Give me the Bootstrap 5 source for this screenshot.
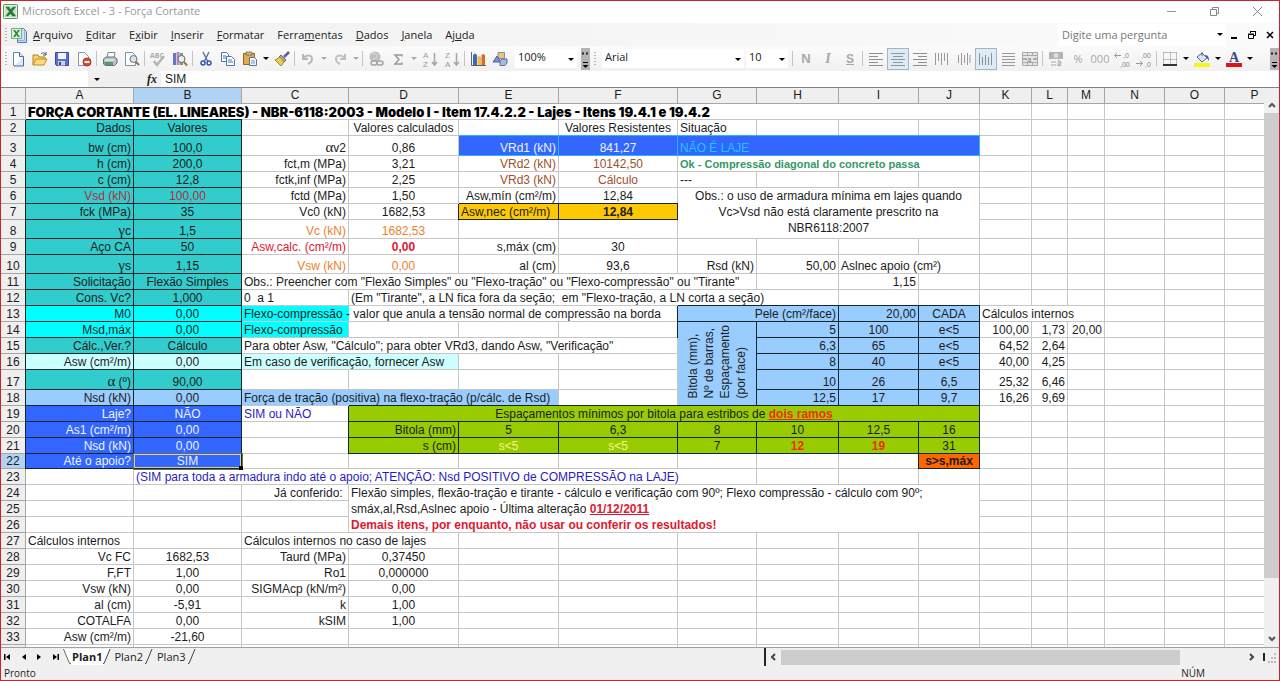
<!DOCTYPE html>
<html lang="pt-BR">
<head>
<meta charset="utf-8">
<meta name="viewport" content="width=device-width, initial-scale=1">
<title>Microsoft Excel - 3 - Força Cortante</title>
<link href="https://cdn.jsdelivr.net/npm/bootstrap@5.3.0/dist/css/bootstrap.min.css" rel="stylesheet">
<style>
  :root { --ui: "Open Sans", "Noto Sans", sans-serif; --cell: "Liberation Sans", Arial, sans-serif; }
  body { font-family: var(--ui); font-size: 11px; line-height: 16px; color: #1c1c1c; background: #f0f0f0; }
  .app { height: 100vh; border: 1px solid #cc2229; }
  .app > * { flex-shrink: 0; }
  button, input, select { font: inherit; color: inherit; border: 0; padding: 0; background: none; border-radius: 0; }
  svg { display: block; }

  .titlebar { height: 22px; background: #fff; color: #999; font-size: 11px; padding: 0 0 2px 2px; }
  .titlebar button { width: 43px; color: #999; }
  .menubar { height: 23px; background: linear-gradient(90deg, #f1f1f1, #fbfbfb); padding-left: 4px; }
  .menubar .menus { gap: 13px; margin-left: 6px; }
  .menubar .menus a { color: #222; text-decoration: none; }
  .menubar .askbox { background: #fff; width: 167px; }
  .menubar .ask { width: 150px; padding-left: 4px; }
  .menubar .ask::placeholder { color: #777; opacity: 1; }
  .grip { width: 2px; height: 14px; flex: none; background: repeating-linear-gradient(#b5b5b5 0 1px, transparent 1px 3px); }

  .toolbar { height: 25px; background: linear-gradient(#fbfbfb, #f1f1f1); padding-left: 4px; overflow: hidden; }
  .tb { width: 22px; height: 22px; flex: none; display: flex; align-items: center; justify-content: center; }
  .tb.on { background: #dfeaf5; border: 1px solid #a3b4c4; }
  .tb.off { color: #a8a8a8; }
  .dd { width: 10px; height: 22px; flex: none; display: flex; align-items: center; justify-content: center; }
  .dd::before, .drop::after { content: ""; border: 3px solid transparent; border-top-color: #000; border-bottom: 0; }
  .dd.off::before { border-top-color: #aaa; }
  .vr-line { width: 1px; height: 15px; margin: 0 2px 0 1px; background: #c4c4c4; flex: none; }
  .drop { background: #fff; height: 19px; position: relative; flex: none; }
  .drop select { appearance: none; width: 100%; padding-left: 3px; }
  .drop::after { position: absolute; right: 3px; top: 9px; pointer-events: none; }
  .zoom-drop { width: 62px; } .font-drop { width: 142px; margin-left: 2px; } .size-drop { width: 42px; margin-left: 2px; }
  .bold-n { font: bold 13px var(--cell); } .ital-i { font: italic bold 14px "Liberation Serif", serif; } .under-s { font: bold 12px var(--cell); }
  .more { width: 9px; height: 22px; background: #b4b4b4; flex: none; }

  .formula { height: 16px; background: #fff; font-family: var(--cell); font-size: 12px; }
  .formula .namebox { width: 87px; background: #fff; }
  .formula .tools { width: 73px; background: #f0f0f0; }
  .formula .tools .dd { height: 16px; }
  .formula .fx { font: italic bold 12px/14px "Liberation Serif", serif; margin-right: 4px; }

  .work { background: #fff; border-top: 1px solid #808080; flex: 1 1 0; min-height: 0; overflow: hidden; }
  .sheetview { overflow: hidden; min-width: 0; }
  .sheet { table-layout: fixed; width: 1284px; border-collapse: separate; border-spacing: 0; font-family: var(--cell); font-size: 12px; color: #1c1c1c; }
  .sheet th, .sheet td { padding: 0 2px; border-right: 1px solid #c6c6c6; border-bottom: 1px solid #c6c6c6; white-space: nowrap; vertical-align: bottom; line-height: 14px; }
  .sheet th { background: #efefef; border-color: #a6a6a6; font-weight: 400; text-align: center; }
  .sheet th.sel { background: #b0d3f3; }
  .sheet thead th { line-height: 15px; }
  .r { text-align: right; } .c { text-align: center; }
  .sheet .open { border-right-color: transparent; }
  .sheet .wrap { white-space: normal; line-height: 16px; padding: 0 10px; vertical-align: top; }
  .sheet .notes { line-height: 16px; vertical-align: top; border-bottom: 0; box-shadow: inset 0 -1px #c6c6c6; }
  .sheet .box { border-color: #10282c; box-shadow: -1px 0 #10282c, 0 -1px #10282c; }
  .teal { background: #33cccc; } .cyan { background: #00ffff; } .pale { background: #ccffff; }
  .sky { background: #99ccff; } .royal { background: #3366ff; color: #eef3ff; } .lime { background: #99cc00; }
  .gold { background: #fec803; } .fire { background: #ff6600; }
  .sheet .edge { border-color: #28b4ff; box-shadow: 0 -1px #28b4ff; }
  .brown { color: #a0502e; } .orange { color: #f0802c; } .red { color: #e01830; } .wine { color: #b02c44; }
  .green { color: #339966; } .blue { color: #2a1cc0; } .aqua { color: #1cc8ff; } .lemon { color: #f4f78c; } .hot { color: #f02c08; }
  .bo { font-weight: 700; }
  .sheet .slim { font-size: 11px; }
  .sheet .heavy { font-family: Inter, sans-serif; font-weight: 900; font-size: 13px; color: #000; }
  .greek { font: 15px/12px "Liberation Serif", serif; }
  .sheet .cursor { position: relative; outline: 1px solid #6d6a55; box-shadow: inset 0 0 0 1px #d9cf94; }
  .cursor::after { content: ""; position: absolute; right: -2px; bottom: -2px; width: 4px; height: 4px; background: #000; }
  .sheet .tall { vertical-align: middle; padding: 0; }
  .tall span { writing-mode: vertical-rl; transform: rotate(180deg); line-height: 16px; display: inline-block; text-align: left; }

  .vbar { width: 15px; background: #f0f0f0; flex: none; }
  .vbar button { height: 17px; display: flex; justify-content: center; align-items: center; width: 100%; flex: none; }
  .vbar .knob { background: #cdcdcd; flex: 0 0 90%; }
  .tabs { height: 19px; background: #f0f0f0; border-top: 1px solid #a0a0a0; }
  .tabs .nav4 { gap: 4px; padding: 0 1px 0 1px; }
  .tabs .nav4 button { width: 12px; }
  .tabs a { color: #222; text-decoration: none; padding: 0 2px 0 3px; }
  .tabs .current { background: #fff; font-weight: 700; padding: 0 1px; }
  .sheetlist { flex: 0 0 763px; min-width: 0; }
  .hbar .knob { background: #cdcdcd; height: 15px; }
  .status { height: 14px; background: #f0f0f0; font-size: 10px; line-height: 14px; padding: 0 74px 0 3px; }
</style>
</head>
<body>
<svg class="d-none" aria-hidden="true">
  <symbol id="xl" viewBox="0 0 16 16"><rect x=".5" y=".5" width="15" height="15" rx="1" fill="#e8f2e4" stroke="#4d8b50"/><rect x="2" y="2" width="12" height="12" fill="#c9e2c3"/><path d="M2.500 3h4L8 5.500 11 3h3l-4 5 4 5h-4L8 10.500 5.500 13H2.500l4-5z" fill="#237a3b"/></symbol>
  <symbol id="left" viewBox="0 0 16 16"><path d="M1 2.500h14M1 5.500h9M1 8.500h14M1 11.500h9M1 14.500h14" stroke="#8f8f8f"/></symbol>
  <symbol id="vert" viewBox="0 0 16 16"><path d="M1.500 2v12M4.500 2v8M7.500 2v12M10.500 2v8M13.500 2v12" stroke="#999"/></symbol>
</svg>

<div class="app d-flex flex-column">
  <header class="titlebar d-flex align-items-center">
    <svg width="15" height="15"><use href="#xl"/></svg>
    <span class="ms-1 me-auto">Microsoft Excel - 3 - Força Cortante</span>
    <button aria-label="Minimizar"><svg class="m-auto" width="11" height="11"><path d="M1 5.500h9" stroke="#999"/></svg></button>
    <button aria-label="Restaurar"><svg class="m-auto" width="11" height="11" fill="none" stroke="#888"><path d="M1.500 3.500h6v6h-6zM3.500 3V1.500h6v6H8"/></svg></button>
    <button aria-label="Fechar"><svg class="m-auto" width="11" height="11"><path d="M1 1l9 9M10 1l-9 9" stroke="#888"/></svg></button>
  </header>

  <nav class="menubar d-flex align-items-center">
    <span class="grip me-1"></span>
    <svg width="16" height="16"><path d="M6.500 1.500h6l3 3v11h-9z" fill="#cfe0f5" stroke="#5478ac"/><path d="M13 3v10H7v1h7V4z" fill="#8eaedb"/><rect x=".5" y="1.500" width="10" height="10" fill="#dcefd8" stroke="#7fae7c"/><path d="M2 3h2l1.500 2L7 3h2L6.500 6.500 9 10H7L5.500 8 4 10H2l2.500-3.500z" fill="#2b8a3e"/></svg>
    <div class="menus d-flex me-auto">
      <a href="#"><u>A</u>rquivo</a><a href="#"><u>E</u>ditar</a><a href="#">E<u>x</u>ibir</a><a href="#"><u>I</u>nserir</a><a href="#"><u>F</u>ormatar</a><a href="#">Ferra<u>m</u>entas</a><a href="#"><u>D</u>ados</a><a href="#"><u>J</u>anela</a><a href="#">Aj<u>u</u>da</a>
    </div>
    <div class="askbox d-flex align-items-center justify-content-between">
      <input class="ask" placeholder="Digite uma pergunta" aria-label="Digite uma pergunta">
      <button class="dd" aria-label="Perguntas recentes"></button>
    </div>
    <button class="ms-1" aria-label="Minimizar pasta"><svg width="10" height="10"><path d="M2 8h6" stroke="#000" stroke-width="2"/></svg></button>
    <button class="ms-2" aria-label="Restaurar pasta"><svg width="10" height="10" fill="none" stroke="#000"><path d="M1.500 4.500h5v4h-5zM1 4h6M3.500 3V1.500h5v4H7M3 1.500h6"/></svg></button>
    <button class="ms-2 me-1" aria-label="Fechar pasta"><svg width="10" height="10"><path d="M2 2l6 6M8 2L2 8" stroke="#000" stroke-width="1.500"/></svg></button>
  </nav>

  <div class="toolbar d-flex align-items-center">
    <span class="grip"></span>
    <button class="tb" aria-label="Novo"><svg width="16" height="16"><path d="M3.500 1.500h6l4 4v9h-10z" fill="#fff" stroke="#6484ae"/><path d="M9.500 1.500v4h4M13.500 6v9H4" fill="#dce8f7" stroke="#4a6895"/></svg></button>
    <button class="tb" aria-label="Abrir"><svg width="16" height="16"><path d="M1 14V4h5l1 2h6v3" fill="#f6d56b" stroke="#ad852e"/><path d="M1 14l3-6h11l-3 6z" fill="#ffd978" stroke="#b98d2f"/><path d="M9 3c2-2 4-1 5 1M14 1v3h-3" fill="none" stroke="#555"/></svg></button>
    <button class="tb" aria-label="Salvar"><svg width="16" height="16"><path d="M1.500 1.500h13v13h-12l-1-1z" fill="#5b6fd0" stroke="#3e4c9c"/><rect x="4" y="2" width="8" height="6" fill="#f2f5ff"/><rect x="4" y="10" width="7" height="4.500" fill="#c9d1ee"/><path d="M5 11h2v3H5z" fill="#39468e"/></svg></button>
    <button class="tb" aria-label="Permissão"><svg width="16" height="16"><path d="M2.500 1.500h6l4 4v9h-10z" fill="#fff" stroke="#8796ac"/><circle cx="11" cy="11" r="4" fill="#dc4b31" stroke="#a8321d"/><path d="M8.500 11h5" stroke="#fff" stroke-width="2"/></svg></button>
    <span class="vr-line"></span>
    <button class="tb" aria-label="Imprimir"><svg width="16" height="16"><path d="M5 7l1-5.500h7L12 7z" fill="#fff" stroke="#788"/><path d="M1.500 8l3-2h8l2.500 2v4l-2.500 2.500h-9L1.500 13z" fill="#b8c1c9" stroke="#65717b"/><path d="M2 11h9v3H3z" fill="#5b9b64"/><path d="M3 9h9" stroke="#fff"/></svg></button>
    <button class="tb" aria-label="Visualizar impressão"><svg width="16" height="16"><path d="M1.500 1.500h7l3 3v10h-10z" fill="#fff" stroke="#7f91ab"/><circle cx="9.500" cy="8" r="3.500" fill="#cfe5f6" stroke="#68747f"/><path d="M12 11l3 3" stroke="#8c6d4c" stroke-width="2"/></svg></button>
    <span class="vr-line"></span>
    <button class="tb off" aria-label="Verificar ortografia"><svg width="16" height="18"><path d="M4 11l3 4 7-9" fill="none" stroke="#b5b5b5" stroke-width="2.500"/><text x="0" y="8" font-size="7" font-weight="700" fill="#aaa">ABC</text></svg></button>
    <button class="tb" aria-label="Pesquisar"><svg width="16" height="16"><path d="M1 2h3v12H1z" fill="#6a76c4"/><path d="M4.500 1h3v13h-3z" fill="#b987c0"/><path d="M8 2h3v12H8z" fill="#7d9b5e"/><circle cx="9.500" cy="8" r="3.500" fill="#e2eef8" stroke="#667"/><path d="M12 11l3 3.500" stroke="#a2762d" stroke-width="2"/></svg></button>
    <span class="vr-line"></span>
    <button class="tb" aria-label="Recortar"><svg width="16" height="16" fill="none"><path d="M5 1l4.500 9M11 1L6.500 10" stroke="#61789c" stroke-width="1.500"/><circle cx="5" cy="12" r="2" stroke="#2f56b0" stroke-width="1.500"/><circle cx="11" cy="12" r="2" stroke="#2f56b0" stroke-width="1.500"/></svg></button>
    <button class="tb" aria-label="Copiar"><svg width="16" height="16" stroke="#4e72b4" fill="#fff"><path d="M1.500 1.500h5l2 2v7h-7z"/><path d="M6.500 5.500h5l3 3v6h-8z"/><path d="M3 5h3M3 7h3M8 9h4M8 11h5"/></svg></button>
    <button class="tb" aria-label="Colar"><svg width="16" height="16"><path d="M1.500 2.500h11v11h-11z" fill="#e2aa4b" stroke="#946526"/><path d="M4 1h6v3H4z" fill="#cdbd7f" stroke="#76694a" stroke-width=".8"/><path d="M7.500 6.500h5l2 2v6h-7z" fill="#f1f5fc" stroke="#5873a4"/><path d="M9 10h4M9 12h4" stroke="#7892c0"/></svg></button>
    <button class="dd" aria-label="Opções de colar"></button>
    <button class="tb" aria-label="Pincel"><svg width="16" height="16"><path d="M15 1l-5 5" stroke="#5a5fa3" stroke-width="2.500"/><path d="M7 4l5 5-2 2-5-5z" fill="#b0a8a0" stroke="#766"/><path d="M1 9l5-3 4 5-3 4z" fill="#e9cf56" stroke="#a8872b"/></svg></button>
    <span class="vr-line"></span>
    <button class="tb off" aria-label="Desfazer"><svg width="16" height="16" fill="none" stroke="#b7b7b7" stroke-width="2"><path d="M3 3v5h5M3 8c2-4 9-5 9 0 0 2-2 4-4 5"/></svg></button>
    <button class="dd off" aria-label="Lista desfazer"></button>
    <button class="tb off" aria-label="Refazer"><svg width="16" height="16" fill="none" stroke="#c1c1c1" stroke-width="2"><path d="M13 3v5H8M13 8C11 4 4 3 4 8c0 2 2 4 4 5"/></svg></button>
    <button class="dd off" aria-label="Lista refazer"></button>
    <span class="vr-line"></span>
    <button class="tb off" aria-label="Hiperlink"><svg width="16" height="16"><circle cx="7" cy="6" r="5.500" fill="#c0c0c0"/><path d="M4 3c3-2 6 1 5 3s-4 1-4 3" fill="none" stroke="#ddd"/><g fill="#eee" stroke="#a5a5a5" stroke-width="1.500"><rect x="3" y="10" width="6" height="4" rx="2"/><rect x="9" y="10" width="6" height="4" rx="2"/></g></svg></button>
    <button class="tb off" aria-label="AutoSoma"><svg width="16" height="16"><path d="M12 5.500V4H5l4 4.500L5 13h7v-1.500" fill="none" stroke="#999" stroke-width="1.500"/></svg></button>
    <button class="dd off" aria-label="Outras funções"></button>
    <button class="tb off" aria-label="Classificação crescente"><svg width="16" height="20"><g font-family="Liberation Sans" font-size="8" fill="#999"><text x="1" y="9">A</text><text x="1" y="18">Z</text></g><path d="M12.500 4v11M10 13l2.500 3 2.500-3" fill="none" stroke="#a5a5a5" stroke-width="1.500"/></svg></button>
    <button class="tb off" aria-label="Classificação decrescente"><svg width="16" height="20"><g font-family="Liberation Sans" font-size="8" fill="#999"><text x="1" y="9">Z</text><text x="1" y="18">A</text></g><path d="M12.500 4v11M10 13l2.500 3 2.500-3" fill="none" stroke="#a5a5a5" stroke-width="1.500"/></svg></button>
    <span class="vr-line"></span>
    <button class="tb" aria-label="Gráfico"><svg width="16" height="16"><path d="M1.500 1v13.500H16" fill="none" stroke="#567"/><path d="M3 4l2-1.500L7 4v10H3z" fill="#3e67bd"/><path d="M7.500 6L9 5l2 1v8H7.500z" fill="#f0bd3d"/><path d="M11.500 4L13 3l2 1v10h-3.500z" fill="#d66a35"/></svg></button>
    <button class="tb" aria-label="Desenho"><svg width="16" height="16"><path d="M6 1.500h6.500v6H6z" fill="#e4c971" stroke="#8a8ca8"/><path d="M1 11l4-6 4 6z" fill="#7c92d6" stroke="#4d60a9"/><path d="M8 10l2-2h5v4l-2 2.500H8z" fill="#a9b8df" stroke="#5a6cae"/></svg></button>
    <div class="drop zoom-drop ms-1"><select aria-label="Zoom"><option>100%</option></select></div>
    <button class="more ms-1 lh-1" aria-label="Mais botões"><svg width="9" height="22"><path d="M1 5.500h2M5 5.500h2" stroke="#222" stroke-width="2"/><path d="M2 14.500h5" stroke="#000"/><path d="M1.500 17h6l-3 3z"/></svg></button>
    <span class="grip ms-1 me-1"></span>
    <div class="drop font-drop"><select aria-label="Fonte"><option>Arial</option></select></div>
    <div class="drop size-drop"><select aria-label="Tamanho"><option>10</option></select></div>
    <span class="vr-line ms-1"></span>
    <button class="tb off" aria-label="Negrito"><b class="bold-n">N</b></button>
    <button class="tb off" aria-label="Itálico"><i class="ital-i">I</i></button>
    <button class="tb off" aria-label="Sublinhado"><u class="under-s">S</u></button>
    <span class="vr-line"></span>
    <button class="tb" aria-label="Alinhar à esquerda"><svg width="16" height="16"><use href="#left"/></svg></button>
    <button class="tb on" aria-label="Centralizar"><svg width="16" height="16"><path d="M1 2.500h14M3 5.500h10M1 8.500h14M3 11.500h10M1 14.500h14" stroke="#8c98a4"/></svg></button>
    <button class="tb" aria-label="Alinhar à direita"><svg width="16" height="16"><path d="M1 2.500h14M6 5.500h9M1 8.500h14M6 11.500h9M1 14.500h14" stroke="#8f8f8f"/></svg></button>
    <button class="tb" aria-label="Alinhar em cima"><svg width="16" height="16"><use href="#vert"/></svg></button>
    <button class="tb" aria-label="Alinhar no meio"><svg width="16" height="16"><path d="M2.500 4v8M5.500 2v12M8.500 4v8M11.500 2v12M14 4v8" stroke="#999"/></svg></button>
    <button class="tb on" aria-label="Alinhar embaixo"><svg width="16" height="16"><path d="M1.500 2v12M4.500 6v8M7.500 4v10M10.500 6v8M13.500 2v12" stroke="#85929e"/></svg></button>
    <button class="tb" aria-label="Justificar"><svg width="16" height="16"><path d="M2 2.500h13M2 5.500h13M2 8.500h13M2 11.500h13M2 14.500h13" stroke="#999"/></svg></button>
    <button class="tb" aria-label="Mesclar"><svg width="16" height="16"><path d="M.5 1.500h15v13H.5zM.5 4.500h15M.5 11.500h15M5.500 2v2M10.500 2v2M5.500 12v2M10.500 12v2" fill="#e6e6e6" stroke="#aaa"/><path d="M1 8h4M11 8h4" stroke="#777"/><text x="5" y="11" font-size="8" fill="#777">a</text></svg></button>
    <span class="vr-line"></span>
    <button class="tb" aria-label="Moeda"><svg width="16" height="16"><path d="M1 1h14v7H1z" fill="#b4b4b4"/><circle cx="8" cy="4.500" r="2.500" fill="#ddd"/><path d="M3 11h5M3 14h5M10 9l3 2-1 4-3-1" fill="#ccc" stroke="#aaa"/></svg></button>
    <button class="tb off" aria-label="Porcentagem">%</button>
    <button class="tb off" aria-label="Milhares">000</button>
    <button class="tb off" aria-label="Aumentar casas decimais"><svg width="16" height="20"><path d="M7 6.500H1M3 4L.5 6.500 3 9" fill="none" stroke="#999"/><g font-family="Liberation Sans" font-size="7" fill="#888"><text x="9" y="9">,0</text><text x="6" y="18">,00</text></g></svg></button>
    <button class="tb off" aria-label="Diminuir casas decimais"><svg width="16" height="20"><path d="M0 14.500h6M4 12l2.500 2.500L4 17" fill="none" stroke="#999"/><g font-family="Liberation Sans" font-size="7" fill="#888"><text x="5" y="9">,00</text><text x="9" y="18">,0</text></g></svg></button>
    <span class="vr-line"></span>
    <button class="tb" aria-label="Bordas"><svg width="14" height="14"><path d="M.5 .5h13M.5 .5v13M13.500 .5v13M7.500 .5v13M.5 7.500h13" stroke="#888" stroke-dasharray="1 1" fill="none"/><path d="M0 13h14" stroke="#333" stroke-width="2"/></svg></button>
    <button class="dd" aria-label="Opções de bordas"></button>
    <button class="tb" aria-label="Cor do preenchimento"><svg width="16" height="16"><path d="M3 6l5-4 5 5-5 4z" fill="#dce6f3" stroke="#51699a"/><path d="M8 5V1" stroke="#51699a"/><path d="M11 4c3 0 4 2 4 6l-2-3z" fill="#3b5aa5"/><path d="M0 12h16v4H0z" fill="#fdf31c"/></svg></button>
    <button class="dd" aria-label="Cores de preenchimento"></button>
    <button class="tb" aria-label="Cor da fonte"><svg width="16" height="16"><text x="3" y="11" font-family="Liberation Serif" font-weight="700" font-size="14" fill="#34498a">A</text><path d="M0 12h16v4H0z" fill="#e0141c"/></svg></button>
    <button class="dd" aria-label="Cores da fonte"></button>
    <button class="more ms-auto lh-1" aria-label="Mais botões"><svg width="9" height="22"><path d="M1 5.500h2M5 5.500h2" stroke="#222" stroke-width="2"/><path d="M2 14.500h5" stroke="#000"/><path d="M1.500 17h6l-3 3z"/></svg></button>
  </div>

  <div class="formula d-flex">
    <input class="namebox" aria-label="Caixa de nome">
    <div class="tools d-flex align-items-center justify-content-between">
      <button class="dd ms-1" aria-label="Nomes"></button><span class="fx">fx</span>
    </div>
    <input class="flex-grow-1 px-1" aria-label="Barra de fórmulas" value="SIM">
  </div>

  <main class="work d-flex">
    <div class="sheetview flex-grow-1"><table class="sheet"></table></div>
    <div class="vbar d-flex flex-column">
      <button class="mt-2" aria-label="Rolar para cima"><svg width="8" height="6"><path d="M1 5l3-3 3 3" fill="none" stroke="#555" stroke-width="2"/></svg></button>
      <div class="flex-grow-1 d-flex flex-column"><div class="knob"></div></div>
      <button aria-label="Rolar para baixo"><svg width="8" height="6"><path d="M1 1l3 3 3-3" fill="none" stroke="#555" stroke-width="2"/></svg></button>
    </div>
  </main>

  <div class="tabs d-flex">
    <div class="sheetlist d-flex align-items-center">
      <div class="nav4 d-flex">
        <button aria-label="Primeira planilha"><svg width="12" height="8"><path d="M2 1h1.500v6H2zM8 1v6L4 4z"/></svg></button>
        <button aria-label="Planilha anterior"><svg width="12" height="8"><path d="M8 1v6L4 4z"/></svg></button>
        <button aria-label="Próxima planilha"><svg width="12" height="8"><path d="M3 1v6l4-3z"/></svg></button>
        <button aria-label="Última planilha"><svg width="12" height="8"><path d="M3 1v6l4-3zM7.500 1H9v6H7.500z"/></svg></button>
      </div>
      <svg width="8" height="16"><path d="M0 0h8v15H6z" fill="#fff"/><path d="M.5 0l6 14.500H8" fill="none" stroke="#666"/></svg>
      <a class="current" href="#">Plan1</a>
      <svg width="8" height="16"><path d="M0 0h7L1 15H0z" fill="#fff"/><path d="M7 0L1 14.500H0" fill="none" stroke="#444"/></svg>
      <a href="#">Plan2</a>
      <svg width="8" height="16"><path d="M7 0L1 14.500H0" fill="none" stroke="#444"/></svg>
      <a class="ps-1" href="#">Plan3</a>
      <svg width="8" height="16"><path d="M7 0L1 14.500H0" fill="none" stroke="#444"/></svg>
    </div>
    <div class="hbar d-flex align-items-center flex-grow-1 border-start border-2 border-dark">
      <button class="px-1" aria-label="Rolar para a esquerda"><svg width="7" height="8"><path d="M5 1L2 4l3 3" fill="none" stroke="#444" stroke-width="2"/></svg></button>
      <div class="flex-grow-1"><div class="knob" style="width:87%"></div></div>
      <button class="px-2 border-end border-2 border-dark" aria-label="Rolar para a direita"><svg width="7" height="8"><path d="M2 1l3 3-3 3" fill="none" stroke="#444" stroke-width="2"/></svg></button>
      <svg width="14" height="14"><path d="M9 4h2M6 8h2M9 8h2M3 12h2M6 12h2M9 12h2" stroke="#bbb" stroke-width="2"/></svg>
    </div>
  </div>
  <footer class="status d-flex justify-content-between"><span>Pronto</span><span>NÚM</span></footer>
</div>

<script>
  // Column widths in pixels; the first one holds the row numbers.
  const widths = [25, 108, 108, 107, 110, 100, 119, 79, 82, 80, 61, 52, 36, 37, 60, 60, 60];
  const letters = "ABCDEFGHIJKLMNOP";
  const heights = { 3: 20, 8: 19, 10: 19, 17: 20, 22: 15 };
  const A = "<span class='greek'>α</span>", Y = "<span class='greek'>γ</span>";

  // cell address: [content, classes, colspan, rowspan]
  const cells = {
    A1: ["FORÇA CORTANTE (EL. LINEARES) - NBR-6118:2003 - Modelo I - Item 17.4.2.2 - Lajes - Itens 19.4.1 e 19.4.2", "heavy", 10],
    C3: [A + "v2", "r"], C4: ["fct,m (MPa)", "r"], C5: ["fctk,inf (MPa)", "r"], C6: ["fctd (MPa)", "r"], C7: ["Vc0 (kN)", "r"],
    C8: ["Vc (kN)", "r orange"], C9: ["Asw,calc. (cm²/m)", "r red"], C10: ["Vsw (kN)", "r orange"],
    D2: ["Valores calculados", "c"], D3: ["0,86", "c"], D4: ["3,21", "c"], D5: ["2,25", "c"], D6: ["1,50", "c"], D7: ["1682,53", "c"],
    D8: ["1682,53", "c orange"], D9: ["0,00", "c red bo"], D10: ["0,00", "c orange"],
    E3: ["VRd1 (kN)", "r royal edge"], F3: ["841,27", "c royal edge"], G3: ["NÃO É LAJE", "royal aqua edge", 4],
    E4: ["VRd2 (kN)", "r brown"], F4: ["10142,50", "c brown"], G4: ["Ok - Compressão diagonal do concreto passa", "green bo slim", 4],
    E5: ["VRd3 (kN)", "r brown"], F5: ["Cálculo", "c brown"], G5: ["---", ""],
    E6: ["Asw,mín (cm²/m)", "r"], F6: ["12,84", "c"], G6: ["Obs.: o uso de armadura mínima em lajes quando Vc&gt;Vsd não está claramente prescrito na NBR6118:2007", "c wrap", 4, 3],
    E7: ["Asw,nec (cm²/m)", "gold box"], F7: ["12,84", "c bo gold box"],
    F2: ["Valores Resistentes", "c"], G2: ["Situação", ""],
    E9: ["s,máx (cm)", "r"], F9: ["30", "c"], E10: ["al (cm)", "r"], F10: ["93,6", "c"],
    G10: ["Rsd (kN)", "r"], H10: ["50,00", "r"], I10: ["Aslnec apoio (cm²)", "", 2], I11: ["1,15", "r"],
    C11: ['Obs.: Preencher com "Flexão Simples" ou "Flexo-tração" ou "Flexo-compressão" ou "Tirante"', "", 5],
    C12: ["0&nbsp; a 1", ""], D12: ['(Em "Tirante", a LN fica fora da seção;&nbsp; em "Flexo-tração, a LN corta a seção)', "", 5],
    C13: ["Flexo-compressão - valor que anula a tensão normal de compressão na borda", "cyan open"], D13: ["", "", 3],
    G13: ["Pele (cm²/face)", "r sky box", 2], I13: ["20,00", "r sky box"], J13: ["CADA", "c sky box"], K13: ["Cálculos internos", "", 3],
    C14: ["Flexo-compressão", "cyan"], G14: ["<span>Bitola (mm),<br>Nº de barras,<br>Espaçamento<br>(por face)</span>", "c sky box tall", 1, 5],
    C15: ['Para obter Asw, "Cálculo"; para obter VRd3, dando Asw, "Verificação"', "", 4],
    C16: ["Em caso de verificação, fornecer Asw", "pale", 2],
    C18: ["Força de tração (positiva) na flexo-tração (p/cálc. de Rsd)", "sky", 3],
    C19: ["SIM ou NÃO", "blue"],
    D19: ["Espaçamentos mínimos por bitola para estribos de <u class='hot bo'>dois ramos</u>", "c lime box", 7],
    D20: ["Bitola (mm)", "r lime box"], D21: ["s (cm)", "r lime box"],
    J22: ["s&gt;s,máx", "c bo fire box"],
    B23: ["(SIM para toda a armadura indo até o apoio; ATENÇÃO: Nsd POSITIVO de COMPRESSÃO na LAJE)", "blue", 6],
    C24: ["Já conferido:&nbsp;", "r"],
    D24: ["Flexão simples, flexão-tração e tirante - cálculo e verificação com 90º; Flexo compressão - cálculo com 90º;<br>smáx,al,Rsd,Aslnec apoio - Última alteração <u class='red bo'>01/12/2011</u><br><span class='red bo'>Demais itens, por enquanto, não usar ou conferir os resultados!</span>", "notes", 7, 3],
    A27: ["Cálculos internos", ""], C27: ["Cálculos internos no caso de lajes", "", 2]
  };

  // Input block, rows 2 to 22: label, value, fill.
  [["Dados", "Valores", "teal"], ["bw (cm)", "100,0", "teal"], ["h (cm)", "200,0", "teal"], ["c (cm)", "12,8", "teal"],
   ["Vsd (kN)", "100,00", "teal wine"], ["fck (MPa)", "35", "teal"], [Y + "c", "1,5", "teal"], ["Aço CA", "50", "teal"],
   [Y + "s", "1,15", "teal"], ["Solicitação", "Flexão Simples", "teal"], ["Cons. Vc?", "1,000", "teal"], ["M0", "0,00", "cyan"],
   ["Msd,máx", "0,00", "cyan"], ["Cálc.,Ver.?", "Cálculo", "teal"], ["Asw (cm²/m)", "0,00", "pale"], [A + " (º)", "90,00", "teal"],
   ["Nsd (kN)", "0,00", "sky"], ["Laje?", "NÃO", "royal"], ["As1 (cm²/m)", "0,00", "royal"], ["Nsd (kN)", "0,00", "royal"],
   ["Até o apoio?", "SIM", "royal"]].forEach(([label, value, fill], i) => {
    cells["A" + (i + 2)] = [label, "r box " + fill];
    cells["B" + (i + 2)] = [value, "c box " + fill + (i === 20 ? " cursor" : "")];
  });

  // Skin reinforcement, rows 14 to 18, columns H to L.
  [["5", "100", "e&lt;5", "100,00", "1,73"], ["6,3", "65", "e&lt;5", "64,52", "2,64"], ["8", "40", "e&lt;5", "40,00", "4,25"],
   ["10", "26", "6,5", "25,32", "6,46"], ["12,5", "17", "9,7", "16,26", "9,69"]].forEach((row, i) => {
    row.forEach((v, k) => cells["HIJKL"[k] + (i + 14)] = [v, ["r sky box", "c sky box", "c sky box", "r", "r"][k]]);
  });
  cells.M14 = ["20,00", "r"];

  // Stirrup spacing, rows 20 and 21, columns E to J.
  ["5", "6,3", "8", "10", "12,5", "16"].forEach((v, k) => cells["EFGHIJ"[k] + 20] = [v, "c lime box"]);
  [["s&lt;5", "lemon"], ["s&lt;5", "lemon"], ["7", ""], ["12", "hot bo"], ["19", "hot bo"], ["31", ""]]
    .forEach(([v, look], k) => cells["EFGHIJ"[k] + 21] = [v, "c lime box " + look]);

  // Internal calculations, rows 28 to 33.
  [["Vc FC", "1682,53", "Taurd (MPa)", "0,37450"], ["F,FT", "1,00", "Ro1", "0,000000"], ["Vsw (kN)", "0,00", "SIGMAcp (kN/m²)", "0,00"],
   ["al (cm)", "-5,91", "k", "1,00"], ["COTALFA", "0,00", "kSIM", "1,00"], ["Asw (cm²/m)", "-21,60", "", ""]].forEach((row, i) => {
    row.forEach((v, k) => cells["ABCD"[k] + (i + 28)] = [v, k % 2 ? "c" : "r"]);
  });

  let html = "<colgroup>" + widths.map(w => `<col style="width:${w}px">`).join("") + "</colgroup><thead><tr style='height:16px'><th></th>" +
    [...letters].map(l => `<th scope="col"${l === "B" ? " class='sel'" : ""}>${l}</th>`).join("") + "</tr></thead><tbody>";
  const taken = new Set();
  for (let r = 1; r <= 34; r++) {
    html += `<tr style="height:${heights[r] || 16}px"><th scope="row"${r === 22 ? " class='sel'" : ""}>${r < 34 ? r : ""}</th>`;
    for (let c = 0; c < letters.length; c++) {
      const at = letters[c] + r;
      if (taken.has(at)) continue;
      const [text, look = "", cs = 1, rs = 1] = cells[at] || [""];
      for (let y = 0; y < rs; y++) for (let x = 0; x < cs; x++) taken.add(letters[c + x] + (r + y));
      html += `<td class="${look}" colspan="${cs}" rowspan="${rs}">${text}</td>`;
    }
    html += "</tr>";
  }
  document.querySelector(".sheet").innerHTML = html + "</tbody>";
</script>
<script src="https://cdn.jsdelivr.net/npm/bootstrap@5.3.0/dist/js/bootstrap.bundle.min.js"></script>
</body>
</html>
